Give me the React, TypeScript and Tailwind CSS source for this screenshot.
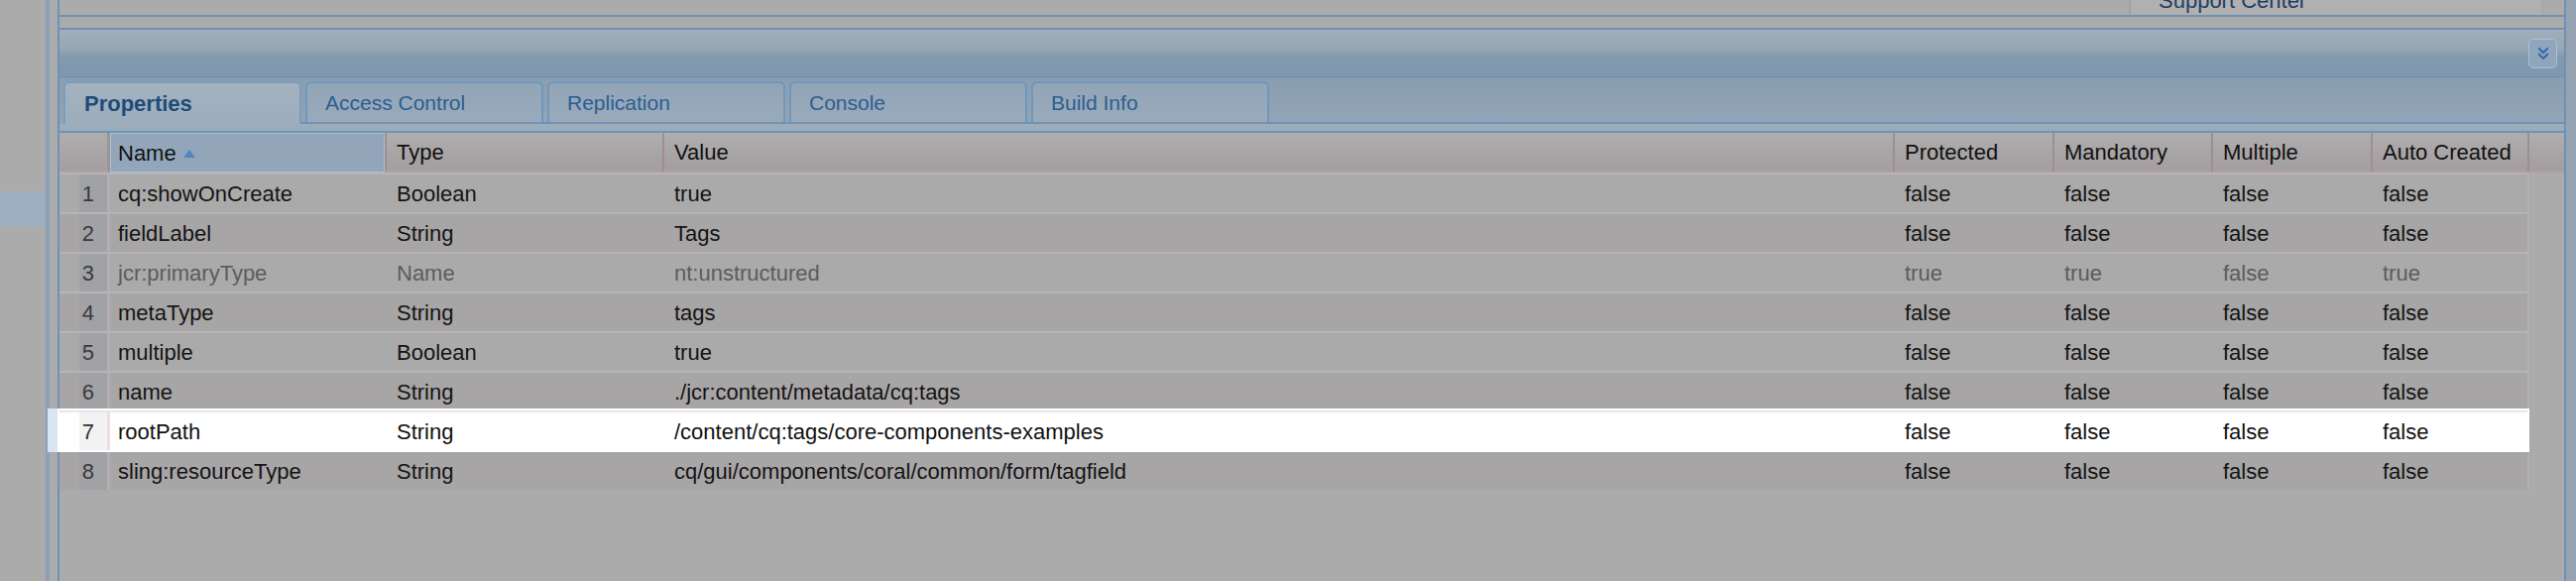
import React from "react";
import { ChevronsDown } from "lucide-react";

type Row = {
  n: number;
  name: string;
  type: string;
  value: string;
  p: string;
  m: string;
  mu: string;
  a: string;
  dim?: boolean;
  sel?: boolean;
};

const rows: Row[] = [
  { n: 1, name: "cq:showOnCreate", type: "Boolean", value: "true", p: "false", m: "false", mu: "false", a: "false" },
  { n: 2, name: "fieldLabel", type: "String", value: "Tags", p: "false", m: "false", mu: "false", a: "false" },
  { n: 3, name: "jcr:primaryType", type: "Name", value: "nt:unstructured", p: "true", m: "true", mu: "false", a: "true", dim: true },
  { n: 4, name: "metaType", type: "String", value: "tags", p: "false", m: "false", mu: "false", a: "false" },
  { n: 5, name: "multiple", type: "Boolean", value: "true", p: "false", m: "false", mu: "false", a: "false" },
  { n: 6, name: "name", type: "String", value: "./jcr:content/metadata/cq:tags", p: "false", m: "false", mu: "false", a: "false" },
  { n: 7, name: "rootPath", type: "String", value: "/content/cq:tags/core-components-examples", p: "false", m: "false", mu: "false", a: "false", sel: true },
  { n: 8, name: "sling:resourceType", type: "String", value: "cq/gui/components/coral/common/form/tagfield", p: "false", m: "false", mu: "false", a: "false" },
];

const tabs = ["Properties", "Access Control", "Replication", "Console", "Build Info"];

const colW = ["w-[277px]", "w-[280px]", "w-[1241px]", "w-[161px]", "w-[160px]", "w-[161px]", "w-[158px]"];
const headers = ["Name", "Type", "Value", "Protected", "Mandatory", "Multiple", "Auto Created"];

function SortUp() {
  return (
    <svg width="12" height="8" viewBox="0 0 12 8" className="ml-[7px] mt-[1px]">
      <path d="M6 0 L12 8 L0 8 Z" fill="#4f86bd" />
    </svg>
  );
}

export default function App() {
  return (
    <div className="w-[2598px] h-[586px] overflow-hidden bg-[#ababab] flex font-['Liberation_Sans',Arial,sans-serif]">
      {/* left tree pane edge */}
      <div className="w-[46px] h-full flex flex-col">
        <div className="h-[193px]" />
        <div className="h-[35px] bg-[#9dafc1]" />
      </div>
      <div className="w-[4px] h-full bg-[#8aa1b8]" />
      <div className="w-[8px] h-full bg-[#a9abad]" />

      {/* main panel */}
      <div className="w-[2530px] h-full border-x-2 border-[#6f91b2] flex flex-col">
        {/* top panel (cut) */}
        <div className="h-[17px] border-b-2 border-[#6f91b2] flex">
          <div className="w-[2087px]" />
          <div className="w-[418px] h-full bg-[#b0b0b0] border-l-2 border-r-2 border-l-[#a2a2a2] border-r-[#a7a7a7] overflow-hidden">
            <div className="-mt-[10px] ml-[28px] text-[22px] leading-[22px] text-[#1f3d66] whitespace-nowrap">
              Support Center
            </div>
          </div>
        </div>
        <div className="h-[11px]" />

        {/* header bar */}
        <div className="h-[50px] border-t-2 border-b border-t-[#6f91b2] border-b-[#6b8fb2] bg-[linear-gradient(to_bottom,#a1aeba_0%,#97a6b4_42%,#8399ae_58%,#7f98b0_100%)] flex items-start justify-end pr-[7px] pt-[9px]">
          <div className="w-[29px] h-[30px] rounded-[5px] border border-[#a9c0d8] bg-[#8fa6bd] flex items-center justify-center">
            <ChevronsDown size={20} strokeWidth={2.75} color="#3a6ea6" />
          </div>
        </div>

        {/* tab strip */}
        <div className="h-[47px] bg-[linear-gradient(to_bottom,#899db1,#93a5b7)] flex items-end pl-[4px]">
          <div className="flex items-end gap-[4px] w-full border-b-2 border-[#6f93b6] h-[43px]">
            {tabs.map((t, i) =>
              i === 0 ? (
                <div
                  key={t}
                  className="w-[240px] h-[43px] -mb-[2px] rounded-t-[6px] border-2 border-b-0 border-[#7b9dbf] bg-[linear-gradient(to_bottom,#a4b2bf,#9dadbc)] flex items-center pl-[19px] text-[22px] font-bold text-[#1f4b7a]"
                >
                  {t}
                </div>
              ) : (
                <div
                  key={t}
                  className="w-[240px] h-[41px] rounded-t-[6px] border-2 border-b-0 border-[#7097bc] bg-[linear-gradient(to_bottom,#92a5b7,#99aabb)] flex items-center pl-[18px] text-[21px] text-[#2d5e90]"
                >
                  {t}
                </div>
              )
            )}
          </div>
        </div>
        <div className="h-[9px] bg-[#9cacbb] border-b-2 border-[#6f93b6]" />

        {/* grid header */}
        <div className="h-[40px] flex text-[22px] text-[#111]">
          <div className="w-[51px] h-full bg-[linear-gradient(to_bottom,#b0adae,#a39fa0)] border-b-2 border-[#b29fa2] border-r-[3px] border-r-[#9c9597]" />
          {headers.map((h, i) =>
            i === 0 ? (
              <div
                key={h}
                className={`${colW[i]} h-full bg-[#93a6b9] border border-[#a7c0d9] flex items-center pl-[7px]`}
              >
                {h}
                <SortUp />
              </div>
            ) : (
              <div
                key={h}
                className={`${colW[i]} h-full bg-[linear-gradient(to_bottom,#b0adae,#a29e9f)] border-b-2 border-[#b39fa2] border-l-2 border-l-[#a08d90] flex items-center pl-[10px]`}
              >
                {h}
              </div>
            )
          )}
          <div className="flex-1 h-full bg-[linear-gradient(to_bottom,#b0adae,#a29e9f)] border-b-2 border-[#b39fa2] border-l-2 border-l-[#a08d90]" />
        </div>

        {/* rows */}
        <div className="flex flex-col text-[22px]">
          {rows.map((r) => {
            const text = r.sel ? "text-[#111]" : r.dim ? "text-[#5c5c5c]" : "text-[#141414]";
            const bg = r.sel
              ? "bg-white relative z-10 shadow-[0_0_0_2px_#ffffff,-10px_0_0_2px_#d8e6f3]"
              : r.n % 2 === 1
              ? "bg-[#abaaaa]"
              : "bg-[#a7a5a6]";
            const sep = r.sel ? "border-[#ebe5e7]" : "border-[#b6b4b5]";
            const vals = [r.name, r.type, r.value, r.p, r.m, r.mu, r.a];
            return (
              <div key={r.n} className="h-[40px] flex">
                <div className={`w-[2489px] h-full flex border-t-2 ${sep} ${bg} ${text}`}>
                  <div className="w-[51px] h-full flex pl-[20px]">
                    <div
                      className={`w-[31px] h-full flex items-center justify-end pr-[13px] border-r-[3px] ${
                        r.sel ? "bg-[#f2f2f2] border-r-[#eadfe2] text-[#333]" : "bg-[#a1a2a5] border-r-[#b3aeb0] text-[#3a3a3a]"
                      }`}
                    >
                      {r.n}
                    </div>
                  </div>
                  {vals.map((v, i) => (
                    <div
                      key={i}
                      className={`${colW[i]} h-full flex items-center whitespace-nowrap ${i === 0 ? "pl-[8px]" : "pl-[12px]"}`}
                    >
                      {v}
                    </div>
                  ))}
                </div>
                <div className="flex-1 border-l-2 border-[#b2b0b1]" />
              </div>
            );
          })}
        </div>
      </div>

      {/* right edge */}
      <div className="w-[10px] h-full bg-[#95a3b2]" />
    </div>
  );
}
